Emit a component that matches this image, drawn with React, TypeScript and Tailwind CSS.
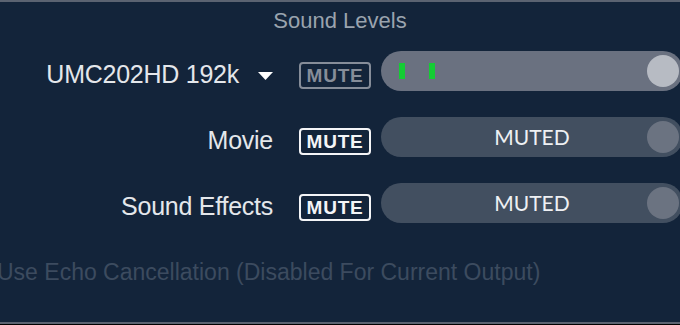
import React from "react";

function MuteButton({ active }: { active: boolean }) {
  return (
    <div
      className={
        active
          ? "w-[72px] h-[27px] mt-[11px] border-2 border-[#f4f5f7] rounded-[4px] flex items-center justify-center text-[#f4f5f7] text-[19px] font-bold leading-none tracking-[0.04em]"
          : "w-[72px] h-[27px] mt-[11px] border-2 border-[#868d99] rounded-[4px] flex items-center justify-center text-[#868d99] text-[19px] font-bold leading-none tracking-[0.04em]"
      }
    >
      MUTE
    </div>
  );
}

function Track({ muted }: { muted: boolean }) {
  if (!muted) {
    return (
      <div className="relative w-[302px] h-[40px] shrink-0 rounded-full bg-[#6a7180] flex items-center">
        <div className="absolute left-[18px] top-[12px] w-[6px] h-[16px] bg-[#14cc34]" />
        <div className="absolute left-[48px] top-[12px] w-[6px] h-[16px] bg-[#14cc34]" />
        <div className="absolute right-[4px] top-[4px] w-[32px] h-[32px] rounded-full bg-[#b7bbc3]" />
      </div>
    );
  }
  return (
    <div className="relative w-[302px] h-[40px] shrink-0 rounded-full bg-[#424f60] flex items-center justify-center">
      <span className="text-[21px] text-[#eef0f3] font-['Lato','Liberation_Sans',sans-serif] leading-none -mt-[2px]">MUTED</span>
      <div className="absolute right-[4px] top-[4px] w-[32px] h-[32px] rounded-full bg-[#6b7381]" />
    </div>
  );
}

function Row({ label, caret, active, muted }: { label: string; caret?: boolean; active: boolean; muted: boolean }) {
  return (
    <div className="flex items-start">
      <div className="w-[273px] shrink-0 h-[28px] mt-[9px] flex items-center justify-end text-[25px] text-[#e4e7eb] leading-none tracking-[-0.01em]">
        <span>{label}</span>
        {caret && (
          <svg width="15" height="8" viewBox="0 0 15 8" className="ml-[19px] mt-[3px]">
            <path d="M0 0 H15 L7.5 8 Z" fill="#ffffff" />
          </svg>
        )}
      </div>
      <div className="ml-[26px] mr-[10px] shrink-0">
        <MuteButton active={active} />
      </div>
      <Track muted={muted} />
    </div>
  );
}

export default function App() {
  return (
    <div className="w-[680px] h-[325px] overflow-hidden bg-[#13243a] flex flex-col font-['Liberation_Sans',Arial,sans-serif]">
      <div className="h-[2px] bg-[#5b6371] shrink-0" />
      <div className="mt-[6px] h-[24px] flex items-center justify-center text-[22px] text-[#9aa3ae]">
        Sound Levels
      </div>
      <div className="mt-[19px] flex flex-col gap-[26px]">
        <Row label="UMC202HD 192k" caret active={false} muted={false} />
        <Row label="Movie" active muted />
        <Row label="Sound Effects" active muted />
      </div>
      <div className="mt-[35px] ml-[-3px] h-[28px] flex items-center text-[23px] text-[#3c4b5f] whitespace-nowrap">
        Use Echo Cancellation (Disabled For Current Output)
      </div>
      <div className="flex-1" />
      <div className="h-[2px] bg-[#5b6371] shrink-0" />
      <div className="h-[1px] bg-black shrink-0" />
    </div>
  );
}
